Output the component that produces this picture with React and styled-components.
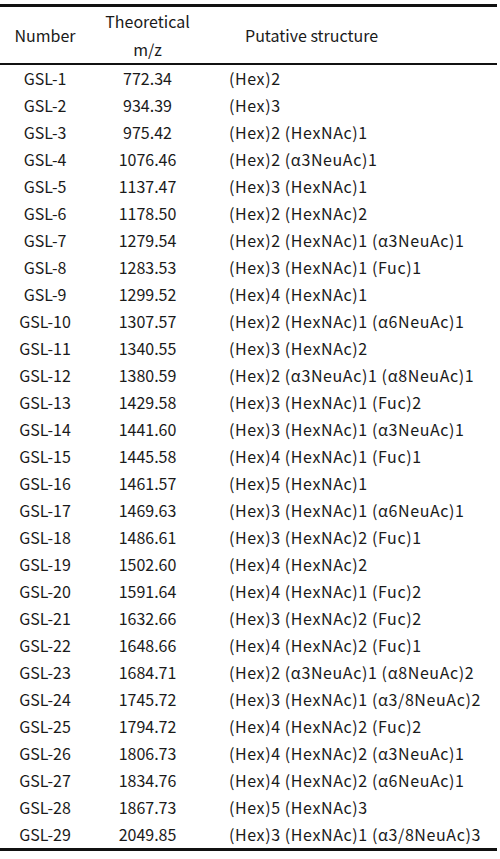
import styled, { createGlobalStyle } from "styled-components";

const GlobalStyle = createGlobalStyle`
  body {
    margin: 0;
    background: #fff;
    font-family: "Noto Sans CJK JP", "Liberation Sans", sans-serif;
    color: #1a1a1a;
  }
`;

const rows = [
  ["GSL-1", "772.34", "(Hex)2"],
  ["GSL-2", "934.39", "(Hex)3"],
  ["GSL-3", "975.42", "(Hex)2 (HexNAc)1"],
  ["GSL-4", "1076.46", "(Hex)2 (α3NeuAc)1"],
  ["GSL-5", "1137.47", "(Hex)3 (HexNAc)1"],
  ["GSL-6", "1178.50", "(Hex)2 (HexNAc)2"],
  ["GSL-7", "1279.54", "(Hex)2 (HexNAc)1 (α3NeuAc)1"],
  ["GSL-8", "1283.53", "(Hex)3 (HexNAc)1 (Fuc)1"],
  ["GSL-9", "1299.52", "(Hex)4 (HexNAc)1"],
  ["GSL-10", "1307.57", "(Hex)2 (HexNAc)1 (α6NeuAc)1"],
  ["GSL-11", "1340.55", "(Hex)3 (HexNAc)2"],
  ["GSL-12", "1380.59", "(Hex)2 (α3NeuAc)1 (α8NeuAc)1"],
  ["GSL-13", "1429.58", "(Hex)3 (HexNAc)1 (Fuc)2"],
  ["GSL-14", "1441.60", "(Hex)3 (HexNAc)1 (α3NeuAc)1"],
  ["GSL-15", "1445.58", "(Hex)4 (HexNAc)1 (Fuc)1"],
  ["GSL-16", "1461.57", "(Hex)5 (HexNAc)1"],
  ["GSL-17", "1469.63", "(Hex)3 (HexNAc)1 (α6NeuAc)1"],
  ["GSL-18", "1486.61", "(Hex)3 (HexNAc)2 (Fuc)1"],
  ["GSL-19", "1502.60", "(Hex)4 (HexNAc)2"],
  ["GSL-20", "1591.64", "(Hex)4 (HexNAc)1 (Fuc)2"],
  ["GSL-21", "1632.66", "(Hex)3 (HexNAc)2 (Fuc)2"],
  ["GSL-22", "1648.66", "(Hex)4 (HexNAc)2 (Fuc)1"],
  ["GSL-23", "1684.71", "(Hex)2 (α3NeuAc)1 (α8NeuAc)2"],
  ["GSL-24", "1745.72", "(Hex)3 (HexNAc)1 (α3/8NeuAc)2"],
  ["GSL-25", "1794.72", "(Hex)4 (HexNAc)2 (Fuc)2"],
  ["GSL-26", "1806.73", "(Hex)4 (HexNAc)2 (α3NeuAc)1"],
  ["GSL-27", "1834.76", "(Hex)4 (HexNAc)2 (α6NeuAc)1"],
  ["GSL-28", "1867.73", "(Hex)5 (HexNAc)3"],
  ["GSL-29", "2049.85", "(Hex)3 (HexNAc)1 (α3/8NeuAc)3"],
];

const Page = styled.div`
  padding-top: 4px;
`;

const Table = styled.table`
  width: 497px;
  border-collapse: collapse;
  table-layout: fixed;
  border-top: 3px solid #111;
  border-bottom: 3px solid #111;
  font-size: 16px;
`;

const Head = styled.thead`
  border-bottom: 2px solid #111;
`;

const HeadCell = styled.th`
  height: 56px;
  padding: 0;
  font-weight: 400;
  line-height: 28px;
  text-align: ${(p) => (p.$left ? "left" : "center")};
  padding-left: ${(p) => (p.$left ? "40px" : "0")};
`;

const Cell = styled.td`
  height: 27px;
  padding: 0;
  line-height: 27px;
  white-space: nowrap;
  text-align: ${(p) => (p.$left ? "left" : "center")};
  padding-left: ${(p) => (p.$left ? "24px" : "0")};
  letter-spacing: ${(p) => (p.$left ? "0.6px" : "0")};
`;

export default function App() {
  return (
    <Page>
      <GlobalStyle />
      <Table>
        <colgroup>
          <col style={{ width: 90 }} />
          <col style={{ width: 115 }} />
          <col />
        </colgroup>
        <Head>
          <tr>
            <HeadCell>Number</HeadCell>
            <HeadCell>
              Theoretical
              <br />
              m/z
            </HeadCell>
            <HeadCell $left>Putative structure</HeadCell>
          </tr>
        </Head>
        <tbody>
          {rows.map(([num, mz, structure]) => (
            <tr key={num}>
              <Cell>{num}</Cell>
              <Cell>{mz}</Cell>
              <Cell $left>{structure}</Cell>
            </tr>
          ))}
        </tbody>
      </Table>
    </Page>
  );
}
